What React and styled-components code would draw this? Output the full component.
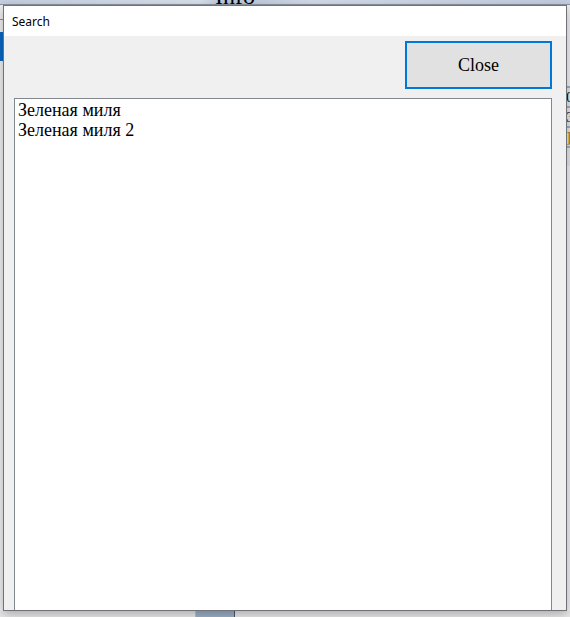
import React from "react";
import styled, { createGlobalStyle } from "styled-components";

const Global = createGlobalStyle`
  html, body { margin: 0; padding: 0; }
  body { width: 570px; height: 617px; overflow: hidden; background: #f0f0f0; }
  * { box-sizing: border-box; }
`;

const Desktop = styled.div`
  position: relative;
  width: 570px;
  height: 617px;
  overflow: hidden;
  background: #f0f0f0;
`;

/* ---------- background application (mostly hidden) ---------- */
const Backdrop = styled.div`
  display: flex;
  flex-direction: column;
  width: 100%;
  height: 100%;
`;

const BackTop = styled.div`
  height: 5px;
  overflow: hidden;
  background: linear-gradient(90deg, #c4cfdf 0%, #d9e0ea 35%, #b8c5d8 40%, #d3dbe7 55%, #c2cde0 100%);
  border-bottom: 1px solid #8c96a4;
`;

const InfoLabel = styled.div`
  margin-top: -16px;
  padding-left: 215px;
  font-family: "Liberation Serif", "Times New Roman", serif;
  font-size: 24px;
  line-height: 24px;
  color: #000;
`;

const BackMain = styled.div`
  flex: 1;
  display: flex;
`;

const LeftRail = styled.div`
  width: 3px;
  display: flex;
  flex-direction: column;
  background: #f0f0f0;
`;

const RailLine = styled.div`
  margin-top: 14px;
  height: 1px;
  background: #8f8f8f;
`;

const RailSelected = styled.div`
  margin-top: 12px;
  height: 29px;
  background: #0a68c4;
`;

const BackCenter = styled.div`
  flex: 1;
  background: #f0f0f0;
`;

const RightRail = styled.div`
  width: 4px;
  display: flex;
  flex-direction: column;
  padding-top: 81px;
  background: #f0f0f0;
`;

const Cell = styled.div`
  height: 20px;
  border-top: 2px solid #9db0c8;
  background: #e6e6e6;
  font-family: "Liberation Serif", serif;
  font-size: 15px;
  line-height: 18px;
  color: ${(p) => p.$color || "#000"};
  overflow: hidden;
  white-space: nowrap;
`;

const BackBottom = styled.div`
  height: 6px;
  display: flex;
  background: #e8e8e8;
`;

const BottomBlock = styled.div`
  margin-left: 195px;
  width: 40px;
  background: #9cb0c9;
  border-left: 1px solid #b8c2cf;
  border-right: 1px solid #4f5660;
`;

/* ---------- dialog window ---------- */
const Window = styled.div`
  position: absolute;
  left: 3px;
  top: 5px;
  width: 564px;
  height: 606px;
  display: flex;
  flex-direction: column;
  border: 1px solid #6f7378;
  background: #f0f0f0;
  box-shadow: 0 3px 10px rgba(0, 0, 0, 0.28);
`;

const TitleBar = styled.div`
  height: 30px;
  flex: none;
  display: flex;
  align-items: center;
  padding-left: 8px;
  background: #ffffff;
  font-family: "Noto Sans", "Open Sans", sans-serif;
  font-size: 12px;
  color: #000;
`;

const Client = styled.div`
  flex: 1;
  min-height: 0;
  overflow: hidden;
  display: flex;
  flex-direction: column;
  padding: 5px 14px 0 10px;
`;

const Toolbar = styled.div`
  display: flex;
  justify-content: flex-end;
  flex: none;
`;

const CloseButton = styled.button`
  width: 147px;
  height: 48px;
  border: 2px solid #0078d7;
  background: #e1e1e1;
  font-family: "Liberation Serif", "Times New Roman", serif;
  font-size: 18px;
  color: #000;
  padding: 0;
  cursor: pointer;
`;

const ListBox = styled.ul`
  flex: none;
  margin: 9px 0 0 0;
  padding: 1px 0 0 3px;
  height: 540px;
  list-style: none;
  background: #ffffff;
  border: 1px solid #828790;
`;

const ListItem = styled.li`
  font-family: "Liberation Serif", "DejaVu Serif", "Times New Roman", serif;
  font-size: 18px;
  line-height: 20px;
  color: #000;
  white-space: nowrap;
`;

export default function App() {
  const items = ["Зеленая миля", "Зеленая миля 2"];
  return (
    <Desktop>
      <Global />
      <Backdrop>
        <BackTop>
          <InfoLabel>Info</InfoLabel>
        </BackTop>
        <BackMain>
          <LeftRail>
            <RailLine />
            <RailSelected />
          </LeftRail>
          <BackCenter />
          <RightRail>
            <Cell>0</Cell>
            <Cell>Э</Cell>
            <Cell $color="#b07000">]</Cell>
            <Cell />
          </RightRail>
        </BackMain>
        <BackBottom>
          <BottomBlock />
        </BackBottom>
      </Backdrop>
      <Window>
        <TitleBar>Search</TitleBar>
        <Client>
          <Toolbar>
            <CloseButton>Close</CloseButton>
          </Toolbar>
          <ListBox>
            {items.map((t) => (
              <ListItem key={t} lang="ru">{t}</ListItem>
            ))}
          </ListBox>
        </Client>
      </Window>
    </Desktop>
  );
}
